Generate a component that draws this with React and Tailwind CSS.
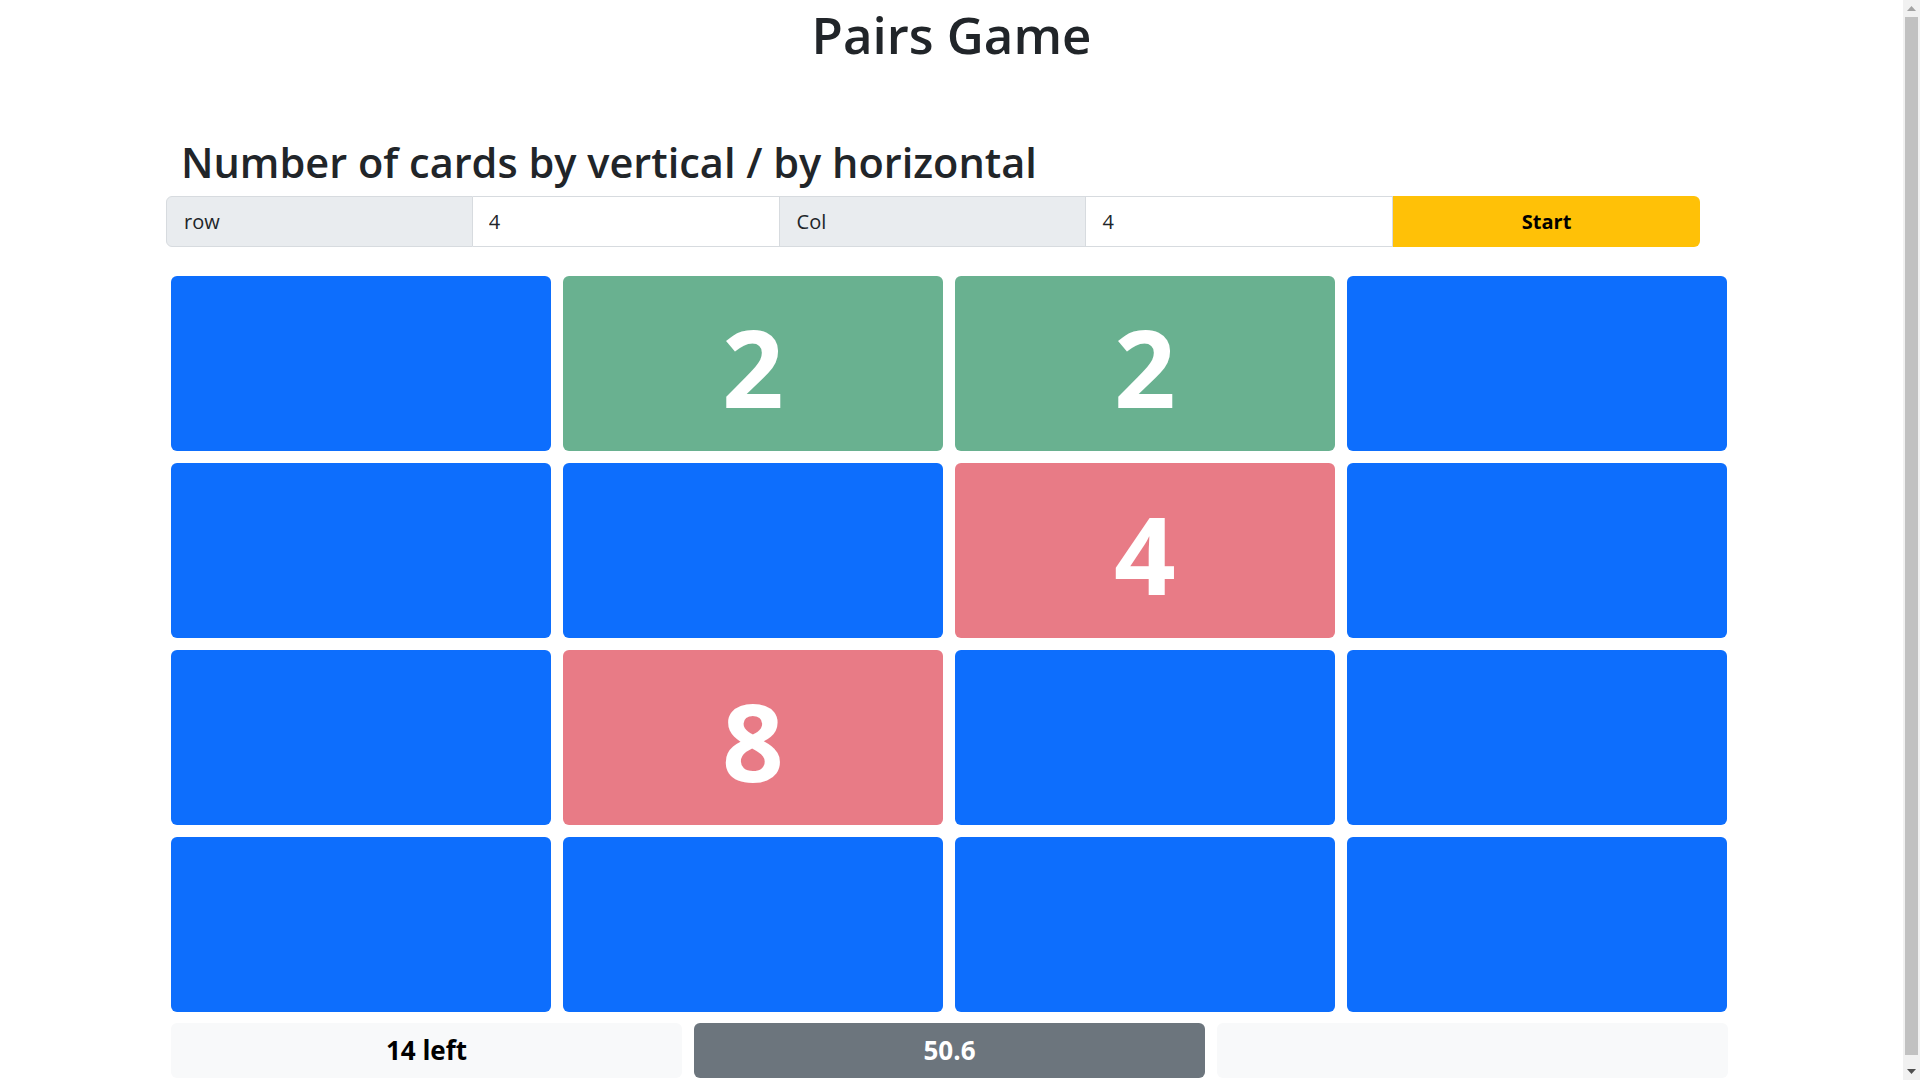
import { useState } from 'react'

const cards = [
  { state: 'hidden' }, { state: 'match', value: 2 }, { state: 'match', value: 2 }, { state: 'hidden' },
  { state: 'hidden' }, { state: 'hidden' }, { state: 'miss', value: 4 }, { state: 'hidden' },
  { state: 'hidden' }, { state: 'miss', value: 8 }, { state: 'hidden' }, { state: 'hidden' },
  { state: 'hidden' }, { state: 'hidden' }, { state: 'hidden' }, { state: 'hidden' },
]

function Card({ card }) {
  // colours are bootstrap success / danger at 65% opacity
  const bg =
    card.state === 'match' ? 'bg-[#69b190]' : card.state === 'miss' ? 'bg-[#e87b86]' : 'bg-[#0d6efd]'
  return (
    <div className={`${bg} rounded-[6px] flex items-center justify-center pt-[6px]`}>
      {card.value && (
        <span className="text-white font-bold text-[108px] leading-none">{card.value}</span>
      )}
    </div>
  )
}

function Scrollbar() {
  return (
    <div className="w-[17px] h-full bg-[#f1f1f1] flex flex-col items-center">
      <div className="h-[17px] flex items-center justify-center">
        <svg width="9" height="5" viewBox="0 0 9 5">
          <path d="M0 5 L4.5 0 L9 5 Z" fill="#a3a3a3" />
        </svg>
      </div>
      <div className="w-[13px] flex-1 bg-[#c1c1c1] mb-[8px]" />
      <div className="h-[17px] flex items-center justify-center">
        <svg width="9" height="5" viewBox="0 0 9 5">
          <path d="M0 0 L4.5 5 L9 0 Z" fill="#505050" />
        </svg>
      </div>
    </div>
  )
}

export default function App() {
  const [rows, setRows] = useState('4')
  const [cols, setCols] = useState('4')

  return (
    <div className="flex h-[1080px] w-[1920px] overflow-hidden bg-white text-[#212529] font-['Open_Sans',sans-serif]">
      <main className="w-[1903px] h-full">
        <h1 className="text-center text-[51px] font-semibold leading-[68px]">Pairs Game</h1>

        <h2 className="mt-[68px] ml-[181px] text-[41.5px] font-semibold leading-[52px]">
          Number of cards by vertical / by horizontal
        </h2>

        <div className="mt-[8px] ml-[166px] w-[1534px] h-[51px] grid grid-cols-5 text-[20px]">
          <span className="flex items-center px-[17px] bg-[#e9ecef] border border-[#d7dbdf] rounded-l-[6px]">
            row
          </span>
          <input
            className="w-full min-w-0 px-[16px] bg-white border border-l-0 border-[#d7dbdf] outline-none"
            value={rows}
            onChange={(e) => setRows(e.target.value)}
          />
          <span className="flex items-center px-[17px] bg-[#e9ecef] border border-l-0 border-[#d7dbdf]">
            Col
          </span>
          <input
            className="w-full min-w-0 px-[16px] bg-white border border-l-0 border-[#d7dbdf] outline-none"
            value={cols}
            onChange={(e) => setCols(e.target.value)}
          />
          <button className="bg-[#ffc107] font-bold text-black rounded-r-[6px]">Start</button>
        </div>

        <div className="mt-[29px] ml-[171px] grid grid-cols-[repeat(4,380px)] auto-rows-[175px] gap-[12px]">
          {cards.map((c, i) => (
            <Card key={i} card={c} />
          ))}
        </div>

        <div className="mt-[11px] ml-[171px] w-[1557px] h-[55px] grid grid-cols-3 gap-[12px] text-[26px] font-bold">
          <div className="bg-[#f8f9fa] rounded-[6px] flex items-center justify-center text-black">14 left</div>
          <div className="bg-[#6c757d] rounded-[6px] flex items-center justify-center text-white">50.6</div>
          <div className="bg-[#f8f9fa] rounded-[6px]" />
        </div>
      </main>
      <Scrollbar />
    </div>
  )
}
